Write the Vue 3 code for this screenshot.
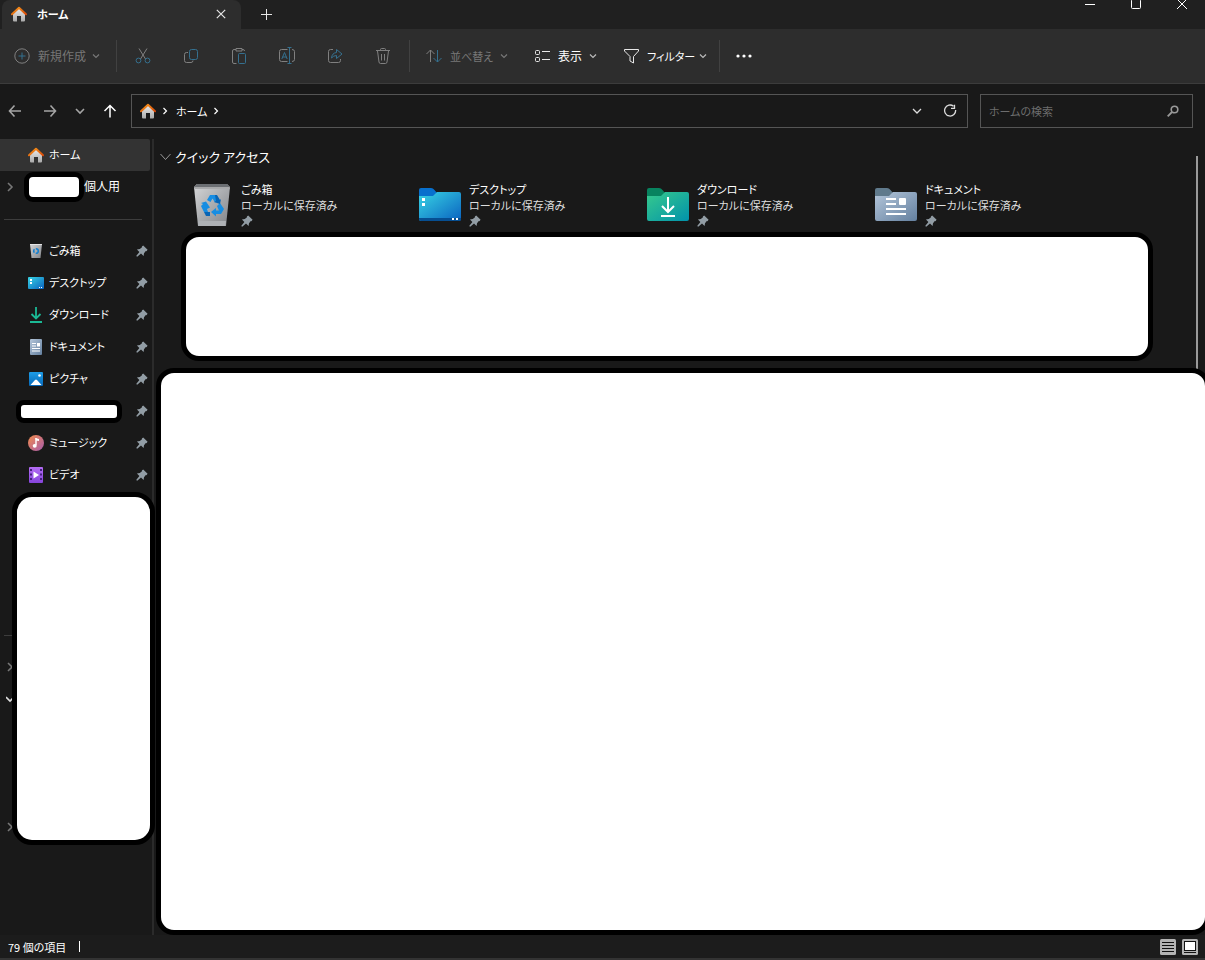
<template>
  <div class="explorer">
    <!-- shared icons -->
    <svg class="sprite" aria-hidden="true">
      <defs>
        <linearGradient id="roof" x1="0" y1="0" x2="1" y2="1"><stop offset="0" stop-color="#f99a1c" /><stop offset="1" stop-color="#d84a08" /></linearGradient>
        <linearGradient id="wall" x1="0" y1="0" x2="0" y2="1"><stop offset="0" stop-color="#ececec" /><stop offset="1" stop-color="#aaa" /></linearGradient>
        <linearGradient id="bin" x1="0" y1="0" x2="1" y2="1"><stop offset="0" stop-color="#d6d7d8" /><stop offset="1" stop-color="#808388" /></linearGradient>
        <linearGradient id="blue" x1="0" y1="0" x2="1" y2="1"><stop offset="0" stop-color="#38d4e4" /><stop offset="1" stop-color="#0a62c0" /></linearGradient>
        <linearGradient id="green" x1="0" y1="0" x2="1" y2="1"><stop offset="0" stop-color="#37ca8c" /><stop offset="1" stop-color="#0192ab" /></linearGradient>
        <linearGradient id="steel" x1="0" y1="0" x2="1" y2="1"><stop offset="0" stop-color="#b4c6da" /><stop offset="1" stop-color="#64809f" /></linearGradient>
        <linearGradient id="sky" x1="0" y1="0" x2="0" y2="1"><stop offset="0" stop-color="#1d9de8" /><stop offset="1" stop-color="#0768b8" /></linearGradient>
        <linearGradient id="tune" x1="0" y1="0" x2="1" y2="1"><stop offset="0" stop-color="#f28c4c" /><stop offset="1" stop-color="#a75bad" /></linearGradient>
        <linearGradient id="film" x1="0" y1="0" x2="0" y2="1"><stop offset="0" stop-color="#b46cf4" /><stop offset="1" stop-color="#8644dc" /></linearGradient>
      </defs>
      <symbol id="i-home" viewBox="0 0 16 16">
        <path d="M2 7.500 8 2l6 5.500V14.500q0 1-1 1h-3V10H6v5.500H3q-1 0-1-1z" fill="url(#wall)" />
        <path d="M1 8.200 8 1.700l7 6.500" fill="none" stroke="url(#roof)" stroke-width="2" stroke-linejoin="round" stroke-linecap="round" />
      </symbol>
      <symbol id="i-pin" viewBox="0 0 12 12">
        <path d="M7.200.6 11.600 4.800 10.400 6.200 9.800 6 8 8.200l-.4 2.700-2.600-2.400L1.200 11.800.2 10.900 3.400 7 .9 4.400 3.800 4 6 2.200 5.900 1.600z" fill="#929da5" />
      </symbol>
      <symbol id="i-down" viewBox="0 0 8 8"><path d="m1 2.500 3 3 3-3" fill="none" stroke="currentColor" stroke-width="1.200" /></symbol>
      <symbol id="i-right" viewBox="0 0 8 10"><path d="m2 1 4 4-4 4" fill="none" stroke="currentColor" stroke-width="1.600" /></symbol>

      <symbol id="i-cut" viewBox="0 0 16 18">
        <path d="M4 1.500 10.500 12M12 1.500 5.500 12" class="s" /><g class="a"><circle cx="3.500" cy="13.500" r="2.400" /><circle cx="12.500" cy="13.500" r="2.400" /></g>
      </symbol>
      <symbol id="i-copy" viewBox="0 0 16 18">
        <path d="M5 5.500H3.500Q1.500 5.500 1.500 7.500v6q0 2 2 2H8q2 0 2-2" class="s" /><rect x="6.500" y="2.500" width="8" height="10" rx="2" class="a" />
      </symbol>
      <symbol id="i-paste" viewBox="0 0 16 18">
        <path d="M5 2.500H3q-1.500 0-1.500 1.500v11q0 1.500 1.500 1.500h2.500M11 2.500h1q1.500 0 1.500 1.500M5 1.500h6v2.500H5z" class="s" /><rect x="7.500" y="6.500" width="7" height="10" rx="1" class="a" />
      </symbol>
      <symbol id="i-rename" viewBox="0 0 18 18">
        <path d="M9.500 2.500H3.500q-2 0-2 2v8q0 2 2 2H9.500M14 2.500q2.500 0 2.500 2v8q0 2-2.500 2" class="s" /><path d="M3.800 12 6.500 5.500 9.200 12M4.500 10h4M11.500 1v15.500M9.500.5h4M9.500 16.500h4" class="a" />
      </symbol>
      <symbol id="i-share" viewBox="0 0 16 18">
        <path d="M6 2.500H3.500q-2 0-2 2v9q0 2 2 2h8q2 0 2-2V12" class="s" /><path d="M9.500 2.500v3Q5 6 4.500 11q2-2.500 5-2.500v3L15 7z" class="a" stroke-linejoin="round" />
      </symbol>
      <symbol id="i-trash" viewBox="0 0 16 18">
        <path d="M1 3.500h14M5.500 3.500V2.500q0-1 1-1h3q1 0 1 1V3.500M2.500 4 4 15q.2 1.500 1.500 1.500h5q1.300 0 1.500-1.500l1.500-11M6.500 7v6.500M9.500 7v6.500" class="s" />
      </symbol>

      <symbol id="i-bin" viewBox="0 0 42 44">
        <path d="M3 4 6 1h30l3 3-4 39H7z" fill="url(#bin)" /><path d="m3 4 3-3h30l3 3-1 2H4z" fill="#6c6f73" /><path d="M3.500 5h35" stroke="#e5e5e5" /><path d="m7 38 .5 5h27l.5-5z" fill="#aeb1b5" />
        <path d="m16 17 3-5h6l3 5-4 2.500-2.500-4-2 3.500zM15 18.500l4 6-3 1.500 1 3h-4L10 23l2-2-2-1zM29 20l4 6-3 5h-5v2.500L20 29l5-4v2.500h3L26 23z" fill="#168de2" /><path d="m13 29 6 0v4h-4zM24 12h2l3 5 1-1-1 5-6-2 2-1z" fill="#0865b5" />
      </symbol>
      <symbol id="i-fdesktop" viewBox="0 0 42 34">
        <path d="M0 2q0-2 2-2h10q2 0 3.500 2L18 5v8H0z" fill="#0870cd" /><path d="M0 8h14l4-4h22q2 0 2 2v25q0 2-2 2H2q-2 0-2-2z" fill="url(#blue)" /><path d="M0 30h42v1q0 2-2 2H2q-2 0-2-2z" fill="#064e91" /><path d="M3 10h3v3H3zM3 15h3v3H3zM33 30h2v2h-2zM37 30h2v2h-2z" fill="#fff" />
      </symbol>
      <symbol id="i-fdownload" viewBox="0 0 42 34">
        <path d="M0 2q0-2 2-2h10q2 0 3.500 2L18 5v8H0z" fill="#08835f" /><path d="M0 8h14l4-4h22q2 0 2 2v25q0 2-2 2H2q-2 0-2-2z" fill="url(#green)" /><path d="M21 9v14M15 18l6 6 6-6M14 28h14" fill="none" stroke="#fff" stroke-width="2" />
      </symbol>
      <symbol id="i-fdocument" viewBox="0 0 42 34">
        <path d="M0 2q0-2 2-2h10q2 0 3.500 2L18 5v8H0z" fill="#607a8c" /><path d="M0 8h14l4-4h22q2 0 2 2v25q0 2-2 2H2q-2 0-2-2z" fill="url(#steel)" /><path d="M11 11h10M11 16h10M11 21h20M11 26h20" stroke="#fff" stroke-width="2" /><rect x="24" y="10" width="7" height="7" rx="1" fill="#fff" />
      </symbol>

      <symbol id="i-sbin" viewBox="0 0 16 16"><path d="M2 1h12l-1.500 14h-9z" fill="url(#bin)" /><path d="M2 1.500h12" stroke="#e5e5e5" /><circle cx="8" cy="8" r="2.300" fill="none" stroke="#1681d0" stroke-width="1.600" stroke-dasharray="3.500 1.300" /></symbol>
      <symbol id="i-sdesktop" viewBox="0 0 16 16"><rect y="2" width="16" height="12" rx="1" fill="url(#blue)" /><path d="M2 4h2v2H2zM2 7h2v2H2zM11 12h1v1h-1zM13 12h1v1h-1z" fill="#fff" /></symbol>
      <symbol id="i-sdownload" viewBox="0 0 16 16"><path d="M8 0v11M3.500 7 8 11.500 12.500 7M2 15h12" fill="none" stroke="#1bb995" stroke-width="1.800" /></symbol>
      <symbol id="i-sdocument" viewBox="0 0 16 16"><rect x="2" width="12" height="16" rx="1" fill="url(#steel)" /><path d="M4 4.500h4M4 7h4M4 9.500h8M4 12h8" stroke="#fff" /><path d="M9 4h3v3.500H9z" fill="#fff" /></symbol>
      <symbol id="i-spicture" viewBox="0 0 16 16"><rect x="1" y="1" width="14" height="14" rx="1" fill="url(#sky)" /><path d="m2.500 14 4.500-5q1-1 2 0l4.500 5z" fill="#fff" /><circle cx="11.500" cy="4.500" r="1.300" fill="#fff" /></symbol>
      <symbol id="i-smusic" viewBox="0 0 16 16"><circle cx="8" cy="8" r="8" fill="url(#tune)" /><path d="M8 3v7" stroke="#fff" stroke-width="1.400" /><path d="M7.300 3 11 4v2L8 5.500z" fill="#fff" /><ellipse cx="6.700" cy="10.800" rx="2" ry="1.900" fill="#fff" /></symbol>
      <symbol id="i-svideo" viewBox="0 0 16 16"><rect x="1" width="14" height="16" rx="1" fill="url(#film)" /><path d="M3 2v13M13 2v13" stroke="#45207e" stroke-width="2" stroke-dasharray="2 2.500" /><path d="m5.500 4.500 5.500 3.500-5.500 3.500z" fill="#fff" /></symbol>
    </svg>

    <!-- title bar -->
    <header class="titlebar">
      <div class="tab">
        <svg class="i16"><use href="#i-home" /></svg>
        <span class="tab-name">ホーム</span>
        <button class="tab-close" aria-label="タブを閉じる">
          <svg width="10" height="10" viewBox="0 0 10 10"><path d="m.8.800 8.400 8.400M9.200.8.800 9.200" fill="none" stroke="#e6e6e6" stroke-width="1.200" /></svg>
        </button>
      </div>
      <button class="tab-add" aria-label="新しいタブ">
        <svg width="11" height="11" viewBox="0 0 11 11"><path d="M5.500 0v11M0 5.500h11" stroke="#e6e6e6" /></svg>
      </button>
      <div class="win-buttons">
        <button aria-label="最小化"><svg width="10" height="10" viewBox="0 0 10 10"><path d="M0 5.500h10" stroke="#fff" /></svg></button>
        <button aria-label="最大化"><svg width="10" height="10" viewBox="0 0 10 10"><rect x=".5" y=".5" width="9" height="9" rx="1" fill="none" stroke="#fff" /></svg></button>
        <button aria-label="閉じる"><svg width="10" height="10" viewBox="0 0 10 10"><path d="m0 0 10 10M10 0 0 10" stroke="#fff" /></svg></button>
      </div>
    </header>

    <!-- command bar -->
    <div class="toolbar">
      <button class="cmd new off">
        <svg class="i16" viewBox="0 0 16 16"><circle cx="8" cy="8" r="7.200" class="s" /><path d="M8 4.500v7M4.500 8h7" class="a" /></svg>
        <span>新規作成</span>
        <svg class="i8"><use href="#i-down" /></svg>
      </button>
      <div class="icon-group">
        <button v-for="t in tools" :key="t.icon" :aria-label="t.label" class="off"><svg :width="t.icon === 'rename' ? 18 : 16" height="18"><use :href="'#i-' + t.icon" /></svg></button>
      </div>
      <div class="cmd-group">
        <button class="cmd sort off">
          <svg class="i16" viewBox="0 0 16 16"><path d="M4.500 14V2M.5 6l4-4 4 4" class="s" /><path d="M11.500 2v12M7.500 10l4 4 4-4" class="a" /></svg>
          <span>並べ替え</span>
          <svg class="i8"><use href="#i-down" /></svg>
        </button>
        <button class="cmd view">
          <svg class="i16" viewBox="0 0 16 16"><rect x="1.500" y="2.500" width="4" height="4" rx="1" class="s" /><rect x="1.500" y="9.500" width="4" height="4" rx="1" class="s" /><path d="M8 3.500h8M8 11.500h8" class="s" /></svg>
          <span>表示</span>
          <svg class="i8"><use href="#i-down" /></svg>
        </button>
        <button class="cmd filter">
          <svg class="i16" viewBox="0 0 16 16"><path d="M1.500 1.500h14v1.500L10.500 8.500V15L7 13V8.500L1.500 3z" class="s" stroke-linejoin="round" /></svg>
          <span>フィルター</span>
          <svg class="i8"><use href="#i-down" /></svg>
        </button>
      </div>
      <button class="more" aria-label="もっと見る">
        <svg width="16" height="4" viewBox="0 0 16 4"><circle cx="2" cy="2" r="1.600" fill="#fff" /><circle cx="8" cy="2" r="1.600" fill="#fff" /><circle cx="14" cy="2" r="1.600" fill="#fff" /></svg>
      </button>
    </div>

    <!-- address row -->
    <div class="navbar">
      <div class="nav-buttons">
        <button aria-label="戻る"><svg width="14" height="14" viewBox="0 0 14 14"><path d="M13 7H1.500M6.500 1.500 1.500 7l5 5.500" fill="none" stroke="#a5a5a5" stroke-width="1.600" /></svg></button>
        <button aria-label="進む"><svg width="14" height="14" viewBox="0 0 14 14"><path d="M1 7h11.500M7.500 1.500l5 5.500-5 5.500" fill="none" stroke="#a5a5a5" stroke-width="1.600" /></svg></button>
        <button aria-label="最近の場所"><svg width="10" height="8" viewBox="0 0 10 8"><path d="m1 2 4 4 4-4" fill="none" stroke="#a5a5a5" stroke-width="1.600" /></svg></button>
        <button aria-label="上へ"><svg width="14" height="14" viewBox="0 0 14 14"><path d="M7 13.500V1.500M1.500 7 7 1.500 12.500 7" fill="none" stroke="#fff" stroke-width="1.500" /></svg></button>
      </div>
      <div class="address">
        <svg class="i16"><use href="#i-home" /></svg>
        <svg class="crumb"><use href="#i-right" /></svg>
        <a href="#">ホーム</a>
        <svg class="crumb"><use href="#i-right" /></svg>
        <button class="history" aria-label="履歴"><svg width="10" height="8" viewBox="0 0 10 8"><path d="m1 2 4 4 4-4" fill="none" stroke="#ddd" stroke-width="1.300" /></svg></button>
        <button class="refresh" aria-label="更新"><svg width="14" height="14" viewBox="0 0 14 14"><path d="M12.600 6A5.500 5.500 0 1 1 10.500 2.200M11.500.8v3.500H8" fill="none" stroke="#ddd" stroke-width="1.300" /></svg></button>
      </div>
      <div class="search">
        <input v-model="keyword" type="text" placeholder="ホームの検索" aria-label="ホームの検索" />
        <svg width="12" height="12" viewBox="0 0 12 12"><circle cx="7.500" cy="4.500" r="3.300" fill="none" stroke="#999" stroke-width="1.600" /><path d="M5 7 .7 11.300" stroke="#999" stroke-width="1.800" /></svg>
      </div>
    </div>

    <div class="body">
      <!-- navigation pane -->
      <nav class="sidebar">
        <a href="#" class="row selected"><svg class="i16"><use href="#i-home" /></svg><span>ホーム</span></a>
        <a href="#" class="row personal">
          <svg class="expander"><use href="#i-right" /></svg>
          <i class="mask name-mask"></i>
          <span>個人用</span>
        </a>
        <div class="line"></div>
        <a v-for="p in places" :key="p.icon" href="#" class="row">
          <template v-if="p.name"><svg class="i16"><use :href="'#i-' + p.icon" /></svg><span>{{ p.name }}</span></template>
          <i v-else class="mask place-mask"></i>
          <svg class="pin"><use href="#i-pin" /></svg>
        </a>
        <div class="tree">
          <div class="line"></div>
          <div class="row"><svg class="expander"><use href="#i-right" /></svg></div>
          <div class="row"><svg class="expander open" viewBox="0 0 8 8"><path d="m0 2 4 4 4-4" fill="none" stroke="#ddd" stroke-width="1.600" /></svg></div>
          <div class="row last"><svg class="expander"><use href="#i-right" /></svg></div>
          <i class="mask tree-mask"></i>
        </div>
      </nav>

      <!-- content -->
      <main class="content">
        <h2><svg width="11" height="8" viewBox="0 0 11 8"><path d="m.5 1 5 5.500 5-5.500" fill="none" stroke="#999" /></svg>クイック アクセス</h2>
        <div class="tiles">
          <a v-for="f in folders" :key="f.icon" href="#" class="tile">
            <svg :width="42" :height="f.icon === 'bin' ? 44 : 34"><use :href="'#i-' + f.icon" /></svg>
            <div class="tile-text">
              <div class="tile-name">{{ f.name }}</div>
              <div>ローカルに保存済み</div>
              <svg class="pin"><use href="#i-pin" /></svg>
            </div>
          </a>
        </div>
        <div class="mask quick-mask"></div>
        <div class="mask files-mask"></div>
        <div class="scrollbar"></div>
      </main>
    </div>

    <footer class="status">
      <span>79 個の項目</span><i class="caret"></i>
      <div class="modes">
        <button aria-label="詳細"><svg width="16" height="16" viewBox="0 0 16 16"><rect width="16" height="16" rx="1.500" fill="#b4b4b4" /><path d="M2 3.500h12M2 6.500h12M2 9.500h12M2 12.500h12" stroke="#111" /></svg></button>
        <button aria-label="大アイコン"><svg width="16" height="16" viewBox="0 0 16 16"><rect width="16" height="16" rx="1.500" fill="#b4b4b4" /><rect x="2.500" y="2.500" width="11" height="9" fill="#fff" stroke="#111" /><path d="M2 13.500h12" stroke="#111" /></svg></button>
      </div>
    </footer>
  </div>
</template>

<script setup>
import { ref } from 'vue'

const keyword = ref('')

const tools = [
  { icon: 'cut', label: '切り取り' },
  { icon: 'copy', label: 'コピー' },
  { icon: 'paste', label: '貼り付け' },
  { icon: 'rename', label: '名前の変更' },
  { icon: 'share', label: '共有' },
  { icon: 'trash', label: '削除' }
]

const places = [
  { icon: 'sbin', name: 'ごみ箱' },
  { icon: 'sdesktop', name: 'デスクトップ' },
  { icon: 'sdownload', name: 'ダウンロード' },
  { icon: 'sdocument', name: 'ドキュメント' },
  { icon: 'spicture', name: 'ピクチャ' },
  { icon: 'hidden', name: '' },
  { icon: 'smusic', name: 'ミュージック' },
  { icon: 'svideo', name: 'ビデオ' }
]

const folders = [
  { icon: 'bin', name: 'ごみ箱' },
  { icon: 'fdesktop', name: 'デスクトップ' },
  { icon: 'fdownload', name: 'ダウンロード' },
  { icon: 'fdocument', name: 'ドキュメント' }
]
</script>

<style>
body {
  background: #191919;
}
</style>

<style scoped>
.explorer {
  display: flex;
  flex-direction: column;
  min-height: 100vh;
  box-sizing: border-box;
  overflow: hidden;
  background: #191919;
  color: #fff;
  font-family: "Noto Sans CJK JP", sans-serif;
  font-feature-settings: "palt";
  font-size: 11px;
  line-height: 16px;
  white-space: nowrap;
}
.sprite {
  position: absolute;
  width: 0;
  height: 0;
}
svg {
  display: block;
  flex: none;
}
button {
  display: flex;
  align-items: center;
  justify-content: center;
  padding: 0;
  border: none;
  background: none;
  color: inherit;
  font: inherit;
  font-feature-settings: inherit;
}
a {
  color: inherit;
  text-decoration: none;
}
.s {
  fill: none;
  stroke: var(--line, #e8e8e8);
}
.a {
  fill: none;
  stroke: var(--accent, #35708f);
}
.off {
  --line: #808080;
  color: #777;
}
.i16 {
  width: 16px;
  height: 16px;
}
.i8 {
  width: 8px;
  height: 8px;
}
.pin {
  width: 12px;
  height: 12px;
}

/* title bar */
.titlebar {
  display: flex;
  height: 29px;
  background: #202020;
}
.tab {
  display: flex;
  align-items: center;
  gap: 10px;
  width: 239px;
  margin-left: 2px;
  padding: 0 15px 2px 9px;
  box-sizing: border-box;
  border-radius: 8px 8px 0 0;
  background: #2d2d2d;
}
.tab-name {
  font-weight: 700;
}
.tab-close {
  margin-left: auto;
}
.tab-add {
  width: 51px;
  height: 28px;
}
.win-buttons {
  display: flex;
  margin-left: auto;
}
.win-buttons button {
  width: 46px;
  height: 8px;
}

/* command bar */
.toolbar {
  display: flex;
  align-items: center;
  height: 54px;
  padding-left: 14px;
  border-bottom: 1px solid #3c3c3c;
  background: #2d2d2d;
}
.cmd {
  justify-content: flex-start;
  gap: 4px;
}
.cmd .i16 {
  margin-right: 4px;
}
.cmd .i8 {
  margin-left: auto;
}
.cmd:not(.off) .i8 {
  color: #bbb;
}
.new {
  width: 86px;
  margin-right: 16px;
  font-size: 12px;
}
.sort {
  width: 82px;
}
.view {
  width: 63px;
  font-size: 12px;
}
.filter {
  width: 80px;
}
.icon-group {
  display: flex;
  padding: 0 2px;
  border: solid #414141;
  border-width: 0 1px;
}
.icon-group button {
  width: 48px;
  height: 32px;
}
.cmd-group {
  display: flex;
  align-items: center;
  gap: 26px;
  height: 32px;
  padding: 0 16px;
  border-right: 1px solid #414141;
}
.more {
  width: 48px;
  height: 32px;
}

/* address row */
.navbar {
  display: flex;
  align-items: center;
  height: 34px;
  padding: 10px 12px 11px 0;
}
.nav-buttons {
  display: flex;
  width: 131px;
}
.nav-buttons button {
  width: 30px;
  height: 32px;
}
.nav-buttons button:nth-child(2) {
  width: 40px;
}
.nav-buttons button:nth-child(3) {
  width: 20px;
}
.nav-buttons button:nth-child(4) {
  width: 39px;
}
.address {
  display: flex;
  align-items: center;
  flex: 1;
  height: 34px;
  padding: 0 10px 0 8px;
  box-sizing: border-box;
  border: 1px solid #555;
}
.crumb {
  width: 6px;
  height: 8px;
  margin: 0 8px 0 6px;
}
.history {
  width: 20px;
  height: 32px;
  margin-left: auto;
}
.refresh {
  width: 14px;
  height: 32px;
  margin-left: 16px;
}
.search {
  display: flex;
  align-items: center;
  width: 213px;
  height: 34px;
  margin-left: 12px;
  padding: 0 13px 0 8px;
  box-sizing: border-box;
  border: 1px solid #555;
}
.search input {
  flex: 1;
  min-width: 0;
  padding: 0;
  border: none;
  outline: none;
  background: none;
  color: #fff;
  font: inherit;
  font-feature-settings: inherit;
}
.search input::placeholder {
  color: #6d6d6d;
  opacity: 1;
}

.body {
  display: flex;
  flex: 1;
}
/* blanked out areas */
.mask {
  display: block;
  box-sizing: border-box;
  border: 5px solid #000;
  background: #fff;
}

/* navigation pane */
.sidebar {
  width: 152px;
  border-right: 2px solid #2b2b2b;
}
.row {
  display: flex;
  align-items: center;
  gap: 5px;
  height: 32px;
  padding: 0 4px 0 28px;
  box-sizing: border-box;
}
.row span {
  padding-bottom: 2px;
}
.row .pin {
  margin-left: auto;
}
.selected {
  width: 150px;
  border-radius: 0 2px 2px 0;
  background: #333;
}
.personal {
  gap: 0;
  padding-left: 6px;
  font-size: 12px;
}
.expander {
  width: 8px;
  height: 10px;
  color: #777;
}
.name-mask {
  width: 60px;
  height: 30px;
  margin: 0 0 0 10px;
  border-radius: 9px;
}
.place-mask {
  width: 106px;
  height: 23px;
  margin-left: -12px;
  border-radius: 8px;
}
.line {
  height: 1px;
  margin: 16px 10px 15px 4px;
  background: #3d3d3d;
}
.tree {
  position: relative;
  padding-top: 128px;
}
.tree .row {
  padding-left: 6px;
}
.tree .last {
  margin-top: 96px;
}
.tree-mask {
  position: absolute;
  top: 1px;
  left: 12px;
  width: 143px;
  height: 353px;
  border-radius: 20px;
}

/* content */
.content {
  position: relative;
  display: flex;
  flex-direction: column;
  flex: 1;
  min-width: 0;
}
h2 {
  display: flex;
  align-items: center;
  gap: 4px;
  height: 36px;
  margin: 0;
  padding-left: 6px;
  font-size: 13px;
  font-weight: 400;
}
.tiles {
  display: grid;
  grid-template-columns: repeat(auto-fill, 228px);
  margin-left: 37px;
  height: 57px;
  overflow: hidden;
}
.tile {
  display: flex;
  align-items: center;
  gap: 8px;
  height: 60px;
}
.tile-text {
  padding-bottom: 2px;
  color: #dedede;
}
.tile-name {
  color: #fff;
}
.tile-text .pin {
  margin-top: 2px;
}
.quick-mask {
  height: 129px;
  margin: 0 52px 7px 27px;
  border-radius: 18px;
}
.files-mask {
  position: relative;
  z-index: 1;
  flex: 1;
  margin: 0 -5px 0 2px;
  border-radius: 18px;
}
.scrollbar {
  position: absolute;
  top: 17px;
  right: 7px;
  bottom: 8px;
  width: 2px;
  background: #9a9a9a;
}

/* status bar */
.status {
  display: flex;
  align-items: center;
  height: 23px;
  padding: 0 7px 0 8px;
  border-bottom: 2px solid #333;
  background: #1c1c1c;
}
.caret {
  width: 1px;
  height: 11px;
  margin-left: 13px;
  background: #fff;
}
.modes {
  display: flex;
  gap: 6px;
  margin-left: auto;
}
</style>
